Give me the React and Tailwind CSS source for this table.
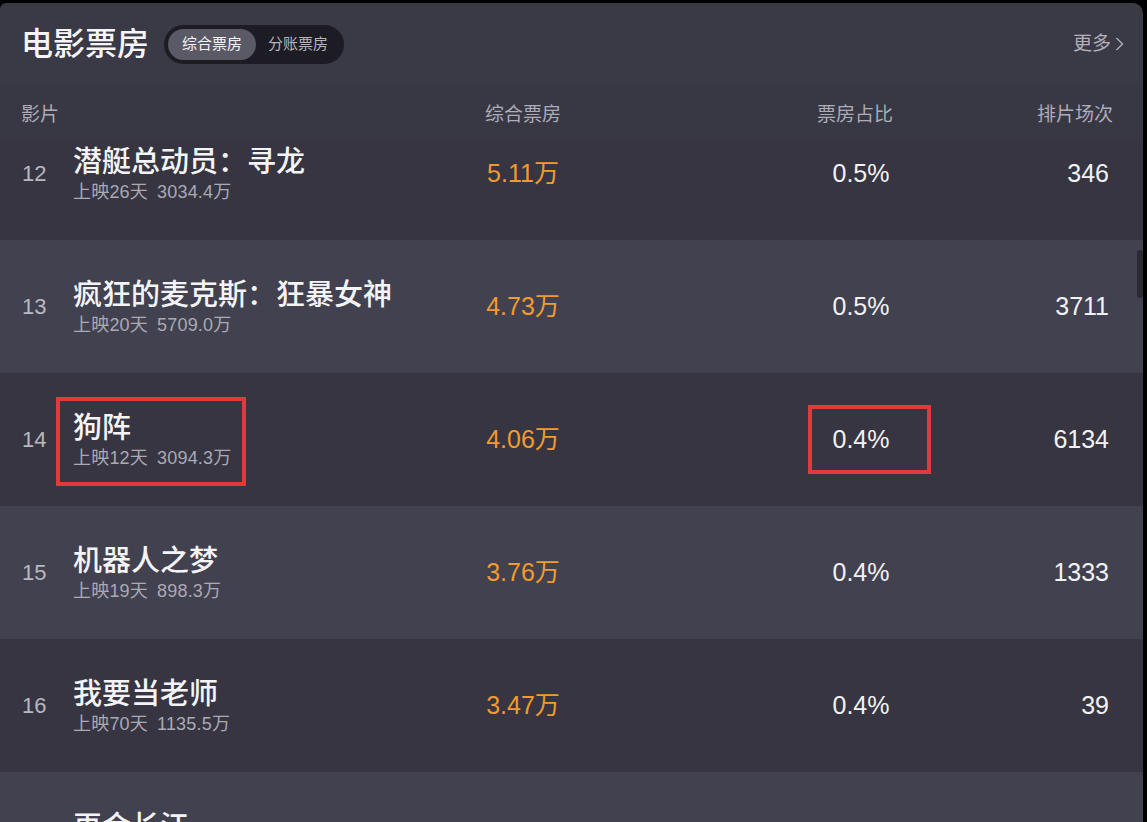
import React from "react";

const rows = [
  { rank: 12, title: "潜艇总动员：寻龙", days: "上映26天", total: "3034.4万", box: "5.11万", pct: "0.5%", shows: "346" },
  { rank: 13, title: "疯狂的麦克斯：狂暴女神", days: "上映20天", total: "5709.0万", box: "4.73万", pct: "0.5%", shows: "3711" },
  { rank: 14, title: "狗阵", days: "上映12天", total: "3094.3万", box: "4.06万", pct: "0.4%", shows: "6134", marked: true },
  { rank: 15, title: "机器人之梦", days: "上映19天", total: "898.3万", box: "3.76万", pct: "0.4%", shows: "1333" },
  { rank: 16, title: "我要当老师", days: "上映70天", total: "1135.5万", box: "3.47万", pct: "0.4%", shows: "39" },
  { rank: 17, title: "再会长江", days: "上映40天", total: "9012.6万", box: "3.12万", pct: "0.3%", shows: "1120" },
];

const font = { fontFamily: '"Liberation Sans", "Noto Sans CJK SC", sans-serif' };

function Row({ r, i }) {
  const bg = i % 2 === 0 ? "bg-[#363541]" : "bg-[#42414f]";
  return (
    <div className={`relative grid h-[133px] grid-cols-[73px_367px_166px_169px_166px_1fr] items-center ${bg}`}>
      <div className="pl-[22px] text-[22px] text-[#b9b8c2]">{r.rank}</div>
      <div className="flex flex-col">
        <div className="text-[29px] font-medium leading-[34px] text-[#f4f4f6]">{r.title}</div>
        <div className="mt-[2px] flex text-[18px] leading-[22px] tracking-[0.2px] text-[#aaa9b4]">
          <span>{r.days}</span>
          <span className="ml-[9px]">{r.total}</span>
        </div>
      </div>
      <div className="text-center text-[25px] text-[#f29a2e]">{r.box}</div>
      <div />
      <div className="pl-[6px] text-center text-[25px] text-[#f2f2f4]">{r.pct}</div>
      <div className="pr-[34px] text-right text-[25px] text-[#f2f2f4]">{r.shows}</div>
      {r.marked && (
        <>
          <div className="absolute left-[56px] top-[24px] h-[89px] w-[190px] border-[4px] border-[#e23a3c]" />
          <div className="absolute left-[808px] top-[32px] h-[69px] w-[123px] border-[4px] border-[#e23a3c]" />
        </>
      )}
    </div>
  );
}

export default function App() {
  return (
    <div className="h-[822px] w-[1147px] overflow-hidden bg-black pt-[3px]" style={font}>
      <div className="relative flex h-[819px] w-[1143px] flex-col overflow-hidden rounded-tl-[6px] rounded-tr-[10px] bg-[#3a3946]">
        <div className="flex h-[82px] shrink-0 items-center justify-between pl-[21px] pr-[19px]">
          <div className="flex items-center gap-[15px]">
            <h1 className="text-[32px] font-medium leading-none text-[#f6f6f8]">电影票房</h1>
            <div className="flex h-[39px] items-center rounded-full bg-[#1d1c24] px-[4px] text-[15px]">
              <span className="flex h-[31px] items-center rounded-full bg-[#5a5966] px-[14px] text-[#f4f4f6]">综合票房</span>
              <span className="px-[12px] text-[#b5b4bd]">分账票房</span>
            </div>
          </div>
          <div className="flex items-center gap-[4px] text-[19px] text-[#b3b2bc]">
            <span>更多</span>
            <svg width="9" height="16" viewBox="0 0 9 16" fill="none">
              <path d="M1.5 2l6 6-6 6" stroke="#b3b2bc" strokeWidth="1.3" />
            </svg>
          </div>
        </div>
        <div className="grid h-[55px] shrink-0 grid-cols-[73px_367px_166px_169px_166px_1fr] items-center bg-[#383744] pt-[6px] text-[19px] text-[#adacb7]">
          <div className="pl-[21px]">影片</div>
          <div />
          <div className="text-center">综合票房</div>
          <div />
          <div className="pr-[6px] text-center">票房占比</div>
          <div className="pr-[30px] text-right">排片场次</div>
        </div>
        <div className="relative flex-1 overflow-hidden">
          <div className="-mt-[33px]">
            {rows.map((r, i) => (
              <Row key={r.rank} r={r} i={i} />
            ))}
          </div>
          <div className="absolute right-0 top-[110px] h-[48px] w-[6px] rounded-sm bg-[#2b2a33]" />
        </div>
      </div>
    </div>
  );
}
